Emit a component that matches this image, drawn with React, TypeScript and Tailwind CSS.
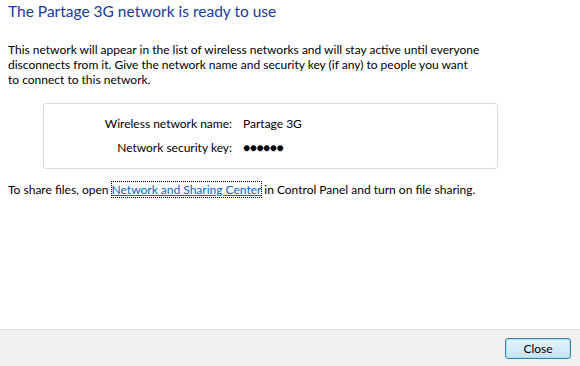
export default function App() {
  return (
    <div
      className="flex h-[366px] w-[580px] flex-col bg-white text-[12px] text-black"
      style={{ fontFamily: "Lato, 'Noto Sans', sans-serif" }}
    >
      <div className="flex-1 px-2">
        <h1 className="pt-[1px] text-[15.5px] leading-[20px] text-[#1a3a9a]">
          The Partage 3G network is ready to use
        </h1>

        <p className="mt-[21px] whitespace-nowrap leading-[15px]">
          This network will appear in the list of wireless networks and will stay active until everyone
          <br />
          disconnects from it. Give the network name and security key (if any) to people you want
          <br />
          to connect to this network.
        </p>

        <div className="ml-[35px] mt-[16px] h-[66px] w-[455px] rounded-[3px] border border-[#d5dbe3] pt-[12px]">
          <div className="grid grid-cols-[188px_1fr] gap-x-[11px] gap-y-[9px] leading-[15px]">
            <span className="text-right">Wireless network name:</span>
            <span>Partage 3G</span>
            <span className="text-right">Network security key:</span>
            <span className="tracking-[-0.5px]">●●●●●●</span>
          </div>
        </div>

        <p className="mt-[13px] leading-[15px]">
          To share files, open{" "}
          <a className="text-[#0066cc] underline outline outline-1 outline-dotted outline-black">
            Network and Sharing Center
          </a>{" "}
          in Control Panel and turn on file sharing.
        </p>
      </div>

      <div className="flex h-[37px] items-center justify-end border-t border-[#dfdfdf] bg-[#f0f0f0] pr-[9px]">
        <button className="h-[21px] w-[66px] rounded-[3px] border border-[#3c7fb1] bg-gradient-to-b from-[#e5f4fc] to-[#c4e5f6] leading-[19px] text-black shadow-[inset_0_0_0_1px_#a6e3f8]">
          Close
        </button>
      </div>
    </div>
  );
}
